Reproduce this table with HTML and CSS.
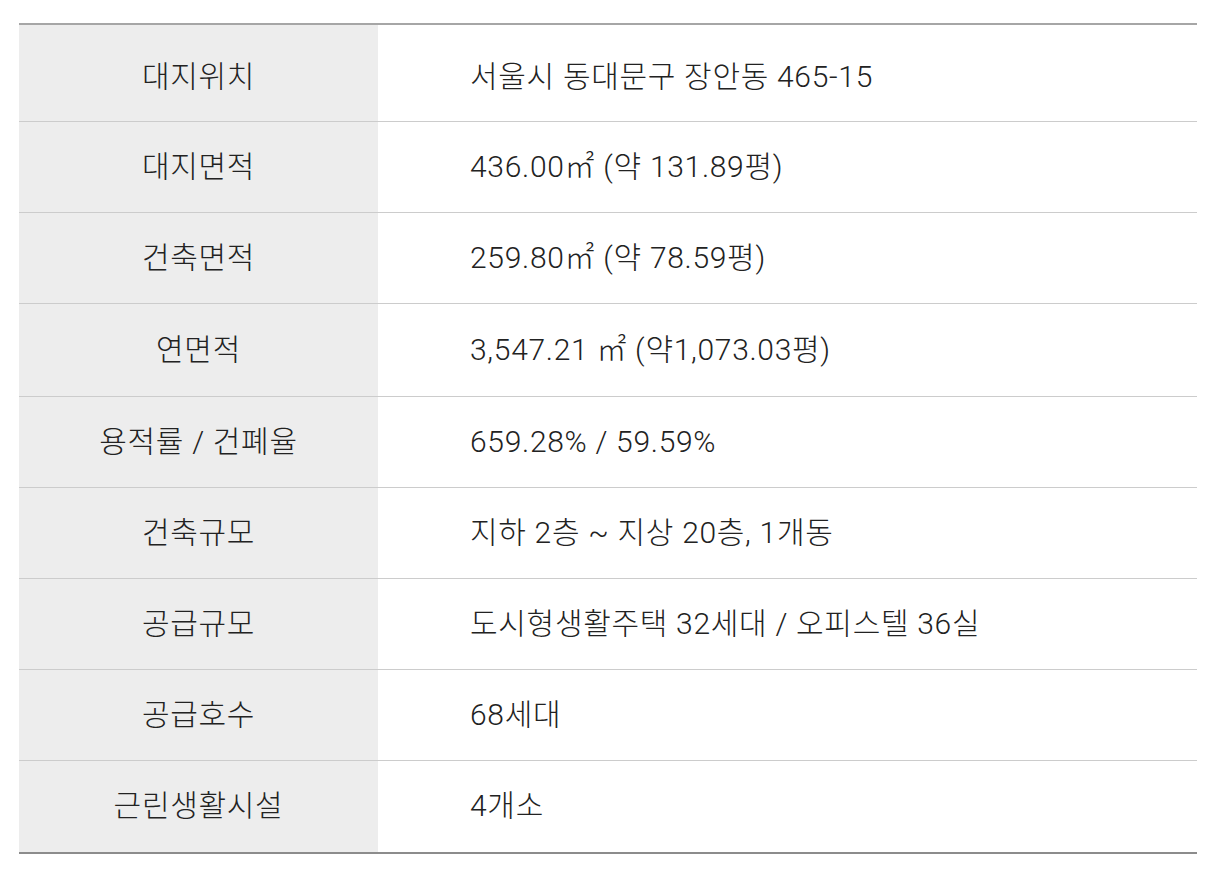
FILE: index.html
```html
<!DOCTYPE html>
<html lang="ko">
<head>
<meta charset="utf-8">
<title>사업개요</title>
<link rel="stylesheet" href="styles.css">
</head>
<body>
<div class="wrap">
  <table class="spec">
    <tbody>
      <tr class="first"><th>대지위치</th><td>서울시 동대문구 장안동 465-15</td></tr>
      <tr><th>대지면적</th><td>436.00㎡ (약 131.89평)</td></tr>
      <tr><th>건축면적</th><td>259.80㎡ (약 78.59평)</td></tr>
      <tr class="tall"><th>연면적</th><td>3,547.21 ㎡ (약1,073.03평)</td></tr>
      <tr><th>용적률 / 건폐율</th><td>659.28% / 59.59%</td></tr>
      <tr><th>건축규모</th><td>지하 2층 ~ 지상 20층, 1개동</td></tr>
      <tr><th>공급규모</th><td>도시형생활주택 32세대 / 오피스텔 36실</td></tr>
      <tr><th>공급호수</th><td>68세대</td></tr>
      <tr class="tall"><th>근린생활시설</th><td>4개소</td></tr>
    </tbody>
  </table>
</div>
</body>
</html>
```

FILE: styles.css
```css
html, body {
  margin: 0;
  padding: 0;
  background: #fff;
}

.wrap {
  padding: 23px 28px 0 19px;
}

.spec {
  width: 1178px;
  border-collapse: collapse;
  border-top: 2px solid #a6a6a6;
  border-bottom: 2px solid #8c8c8c;
  font-family: Roboto, "Noto Sans CJK KR", sans-serif;
  font-size: 30px;
  font-weight: 300;
  letter-spacing: 0.7px;
  color: #222;
}

.spec tr {
  border-bottom: 1px solid #cccccc;
}

.spec tr:last-child {
  border-bottom: none;
}

.spec th,
.spec td {
  height: 91px;
  padding: 0;
  vertical-align: middle;
  box-sizing: border-box;
  line-height: 1.2;
}

.spec tr.tall th,
.spec tr.tall td {
  height: 93px;
}

.spec th {
  width: 359px;
  background: #ededed;
  font-weight: 300;
  text-align: center;
}

.spec td {
  text-align: left;
  padding-left: 92px;
}

.spec tr.first th,
.spec tr.first td {
  height: 97px;
  padding-top: 8px;
}
```
